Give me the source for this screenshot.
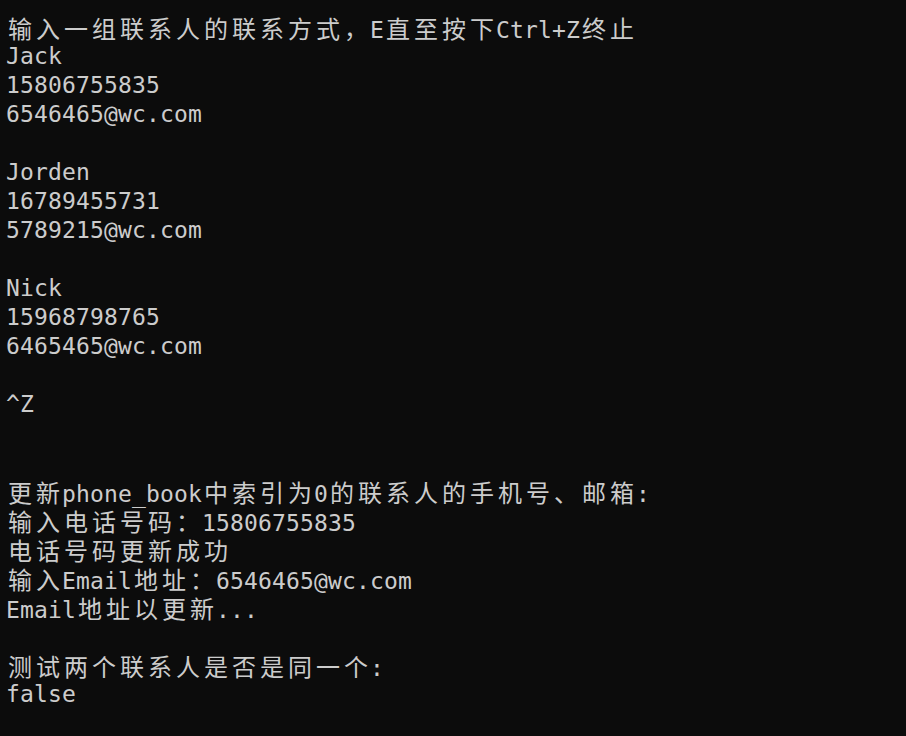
import React from 'react';

const lines = [
  '输入一组联系人的联系方式，E直至按下Ctrl+Z终止',
  'Jack',
  '15806755835',
  '6546465@wc.com',
  '',
  'Jorden',
  '16789455731',
  '5789215@wc.com',
  '',
  'Nick',
  '15968798765',
  '6465465@wc.com',
  '',
  '^Z',
  '',
  '',
  '更新phone_book中索引为0的联系人的手机号、邮箱:',
  '输入电话号码：15806755835',
  '电话号码更新成功',
  '输入Email地址：6546465@wc.com',
  'Email地址以更新...',
  '',
  '测试两个联系人是否是同一个:',
  'false',
];

const isWide = (ch: string) => {
  const c = ch.charCodeAt(0);
  return c >= 0x2e80;
};

const TermLine = ({ text }: { text: string }) => {
  return (
    <div className="h-[29px] leading-[29px] whitespace-pre">
      {Array.from(text).map((ch, i) =>
        isWide(ch) ? (
          <span key={i} className="inline-block w-[28px] text-center text-[24px] font-['Noto_Sans_CJK_SC',sans-serif]">
            {ch}
          </span>
        ) : (
          <span key={i} className="inline-block w-[14px] text-center">
            {ch}
          </span>
        )
      )}
    </div>
  );
};

export default function App() {
  return (
    <div className="w-[906px] h-[736px] overflow-hidden bg-[#0c0c0c] text-[#cccccc] pl-[6px] pt-[13px] text-[23px] font-['DejaVu_Sans_Mono','Noto_Sans_CJK_SC',monospace]">
      {lines.map((l, i) => (
        <TermLine key={i} text={l} />
      ))}
    </div>
  );
}
